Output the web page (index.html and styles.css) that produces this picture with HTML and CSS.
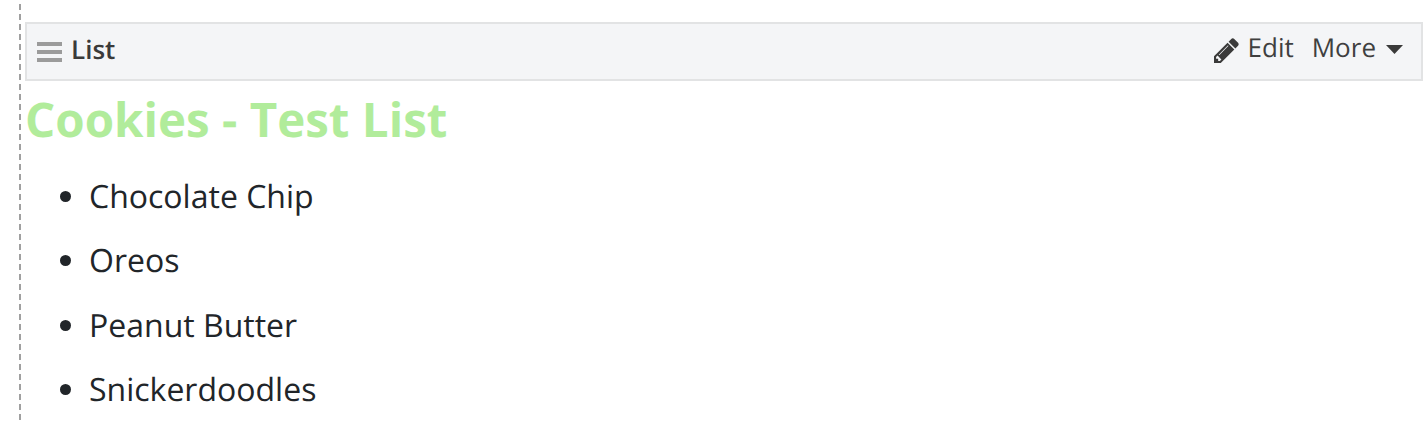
FILE: index.html
```html
<!DOCTYPE html>
<html lang="en">
<head>
<meta charset="utf-8">
<title>Cookies - Test List</title>
<link rel="stylesheet" href="styles.css">
</head>
<body>
<div class="rail">
  <div class="bar">
    <div class="bar-left">
      <svg class="burger" viewBox="0 0 25 20" width="25" height="20"><rect x="0" y="0" width="25" height="4"/><rect x="0" y="8" width="25" height="4"/><rect x="0" y="16" width="25" height="4"/></svg>
      <span class="bar-title">List</span>
    </div>
    <div class="bar-right">
      <a class="action"><svg class="pencil" viewBox="128 128 1536 1536" width="25" height="25"><path d="M491 1536l91-91-235-235-91 91v107h128v128h107zm523-928q0-22-22-22-10 0-17 7l-542 542q-7 7-7 17 0 22 22 22 10 0 17-7l542-542q7-7 7-17zm-54-192l416 416-832 832h-416v-416zm683 96q0 53-37 90l-166 166-416-416 166-165q36-38 90-38 53 0 91 38l235 234q37 39 37 91z"/></svg>Edit</a>
      <a class="action">More<svg class="caret" viewBox="0 0 17 9" width="17" height="9"><path d="M0 0h17L8.5 9z"/></svg></a>
    </div>
  </div>
  <h1 class="title">Cookies - Test List</h1>
  <ul class="items">
    <li>Chocolate Chip</li>
    <li>Oreos</li>
    <li>Peanut Butter</li>
    <li>Snickerdoodles</li>
  </ul>
</div>
</body>
</html>
```
FILE: styles.css
```css
* { box-sizing: border-box; }
html, body { margin: 0; height: 422px; overflow: hidden; background: #fff; }
body { font-family: "Open Sans", sans-serif; color: #212529; text-rendering: geometricPrecision; }
.rail {
  margin: 4px 0 0 19px;
  height: 416px;
  padding: 18px 1px 0 4px;
  border-left: 2px dashed #a0a0a0;
}
.bar {
  display: flex;
  justify-content: space-between;
  align-items: center;
  height: 59px;
  background: #f4f5f7;
  border: 2px solid #e2e3e4;
  padding: 0 18px 4px 10px;
}
.bar-left { display: flex; align-items: center; gap: 9px; }
.burger { fill: #9b9b9b; margin-top: 5px; }
.bar-title { font-size: 26px; font-weight: 600; color: #3a3a3a; line-height: 36px; margin-bottom: 1px; }
.bar-right { display: flex; align-items: center; gap: 18px; }
.action { display: flex; align-items: center; font-size: 26px; line-height: 36px; color: #3f3f3f; margin-bottom: 6px; }
.pencil { fill: #3a3a3a; margin-right: 9px; margin-top: 8px; }
.caret { fill: #3a3a3a; margin-left: 10px; margin-top: 6px; }
.title {
  margin: 5px 0 0 0;
  font-size: 47.5px;
  line-height: 66px;
  font-weight: 700;
  color: #b1ec9b;
}
.items {
  margin: 21px 0 0;
  padding: 0 0 0 64px;
  list-style: disc;
  font-size: 32px;
  line-height: 48px;
}
.items li { margin-bottom: 16.4px; }
```
